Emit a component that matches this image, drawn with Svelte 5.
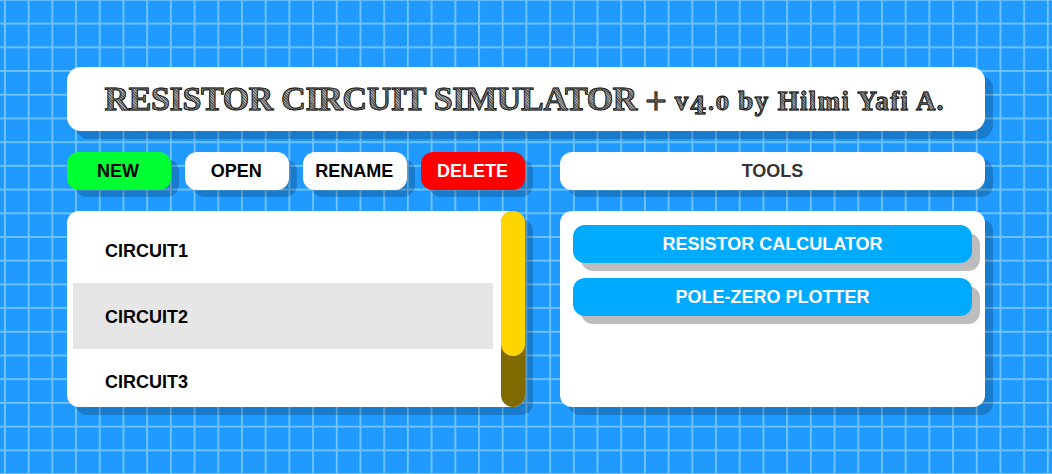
<script>
	const actions = [
		{ label: 'NEW', kind: 'new' },
		{ label: 'OPEN', kind: '' },
		{ label: 'RENAME', kind: '' },
		{ label: 'DELETE', kind: 'delete' }
	]
	const circuits = ['CIRCUIT1', 'CIRCUIT2', 'CIRCUIT3']
	const tools = ['RESISTOR CALCULATOR', 'POLE-ZERO PLOTTER']
	let selected = 1
</script>

<div class="page">
	<header class="title">
		<h1>RESISTOR CIRCUIT SIMULATOR <span class="sub"><span class="plus">+</span> v<span class="four">4</span><span class="small">.0</span> by Hilmi Yafi A.</span></h1>
	</header>

	<div class="columns">
		<section class="col">
			<div class="actions">
				{#each actions as action}
					<button class="btn {action.kind}">{action.label}</button>
				{/each}
			</div>
			<div class="panel list-panel">
				<ul class="list">
					{#each circuits as circuit, i}
						<li class:selected={i === selected}>{circuit}</li>
					{/each}
				</ul>
				<div class="track"><div class="thumb"></div></div>
			</div>
		</section>

		<section class="col">
			<div class="tools-head">TOOLS</div>
			<div class="panel tools">
				{#each tools as tool}
					<button class="tool">{tool}</button>
				{/each}
			</div>
		</section>
	</div>
</div>

<style>
	:global(body) {
		background-color: #209aff;
		background-image:
			linear-gradient(to right, #74c7ff 0, #74c7ff 1.2px, #4db2ff 1.8px, transparent 2.2px),
			linear-gradient(to bottom, #74c7ff 0, #74c7ff 1.2px, #4db2ff 1.8px, transparent 2.2px);
		background-size: 23.71px 23.71px;
		background-position: 4px -1px;
		font-family: "Liberation Sans", Arial, sans-serif;
		overflow: hidden;
	}
	.page {
		box-sizing: border-box;
		min-height: 100vh;
		padding: 67px 67px 67px 66.5px;
		display: flex;
		flex-direction: column;
		gap: 21px;
	}
	.title {
		height: 64px;
		display: flex;
		align-items: center;
		justify-content: center;
		background: #fff;
		border-radius: 14px;
		box-shadow: 8px 8px 0 rgba(0, 0, 0, 0.2);
	}
	h1 {
		margin: 0 2px 0 0;
		font-family: "Liberation Serif", Georgia, serif;
		font-weight: bold;
		font-size: 34px;
		line-height: 1.2;
		letter-spacing: -0.35px;
		white-space: pre;
		color: transparent;
		background: repeating-linear-gradient(45deg, #5e5e5e 0 1px, #9c9c9c 1px 2px);
		-webkit-background-clip: text;
		background-clip: text;
		-webkit-text-stroke: 1px #222;
	}
	.sub {
		font-size: 27px;
		letter-spacing: 1.35px;
	}
	.plus {
		font-size: 38px;
		font-weight: normal;
		line-height: 0;
		letter-spacing: 0;
		vertical-align: -4px;
	}
	.four {
		font-family: "DejaVu Serif", serif;
		font-size: 24px;
		line-height: 0;
		vertical-align: -4px;
	}
	.small {
		font-family: "DejaVu Serif", serif;
		font-size: 19px;
	}
	.columns {
		display: grid;
		grid-template-columns: 458.5px 425px;
		gap: 35px;
	}
	.col {
		display: flex;
		flex-direction: column;
		gap: 21px;
	}
	.actions {
		display: flex;
		gap: 14px;
		height: 38px;
	}
	.btn {
		flex: 1;
		padding: 0 1px 0 0;
		border: 0;
		background: #fff;
		color: #000;
		border-radius: 12px;
		box-shadow: 8px 7px 0 rgba(0, 0, 0, 0.2);
		font: bold 18px "Liberation Sans", Arial, sans-serif;
	}
	.new {
		background: #00ff33;
	}
	.delete {
		background: #ff0000;
		color: #fff;
	}
	.tools-head {
		height: 38px;
		display: flex;
		align-items: center;
		justify-content: center;
		background: #fff;
		color: #333;
		border-radius: 12px;
		box-shadow: 8px 7px 0 rgba(0, 0, 0, 0.2);
		font-weight: bold;
		font-size: 18px;
	}
	.panel {
		height: 196px;
		background: #fff;
		border-radius: 12px;
		box-shadow: 8px 8px 0 rgba(0, 0, 0, 0.2);
	}
	.list-panel {
		display: flex;
	}
	.list {
		flex: 1;
		margin: 0;
		padding: 6.5px 8px 0 6.5px;
		list-style: none;
		overflow: hidden;
	}
	.list li {
		box-sizing: border-box;
		height: 65.5px;
		padding: 3px 0 0 32px;
		display: flex;
		align-items: center;
		font-weight: bold;
		font-size: 18px;
		color: #000;
	}
	.list li.selected {
		background: #e6e6e6;
	}
	.track {
		width: 24px;
		background: #806a00;
		border-radius: 12px;
	}
	.thumb {
		height: 145px;
		background: #ffd500;
		border-radius: 12px;
	}
	.tools {
		box-sizing: border-box;
		padding: 14px 13px;
		display: flex;
		flex-direction: column;
		gap: 15px;
	}
	.tool {
		height: 38px;
		padding: 0;
		border: 0;
		background: #00aaff;
		color: #fff;
		border-radius: 12px;
		box-shadow: 8px 8px 0 #bdbdbd;
		font: bold 18px "Liberation Sans", Arial, sans-serif;
	}
</style>
